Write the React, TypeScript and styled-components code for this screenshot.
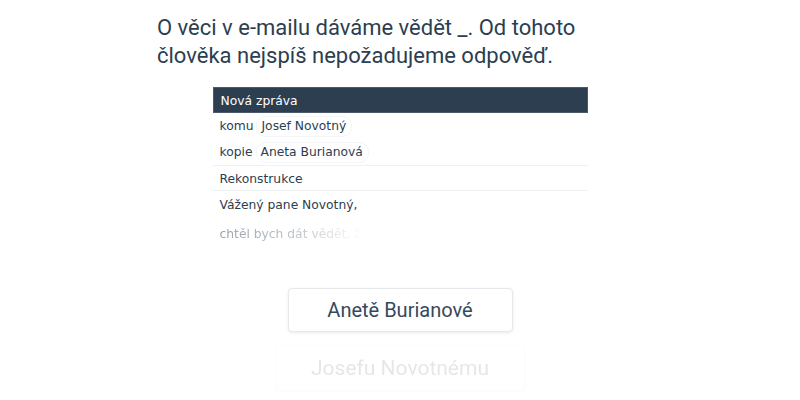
import React from 'react';
import styled, {createGlobalStyle} from "styled-components";

const GlobalStyle = createGlobalStyle`
  html, body {
    margin: 0;
    padding: 0;
    background: #ffffff;
  }
  body {
    font-family: Roboto, "Liberation Sans", sans-serif;
    color: #2c3e50;
  }
`

const colors = {
    dark: "#2c3e50",
    text: "#34495e",
    line: "#eff2f4",
}

type Recipient = { label: string, name: string }

const recipients: Recipient[] = [
    {label: "komu", name: "Josef Novotný"},
    {label: "kopie", name: "Aneta Burianová"},
]

export default function App() {
    return (
        <>
            <GlobalStyle/>
            <Page>
                <Question>
                    O věci v e-mailu dáváme vědět _. Od tohoto člověka nejspíš nepožadujeme odpověď.
                </Question>

                <Mail>
                    <MailTitle>Nová zpráva</MailTitle>
                    {recipients.map(r => (
                        <RecipientRow key={r.label}>
                            <Label>{r.label}</Label>
                            <Chip>{r.name}</Chip>
                        </RecipientRow>
                    ))}
                    <Subject>Rekonstrukce</Subject>
                    <Body>
                        <Line>Vážený pane Novotný,</Line>
                        <FadedLine>chtěl bych dát vědět, že</FadedLine>
                    </Body>
                </Mail>

                <Answers>
                    <Answer>Anetě Burianové</Answer>
                    <Answer $back>Josefu Novotnému</Answer>
                </Answers>
            </Page>
        </>
    );
}

const Page = styled.main`
  width: 800px;
  height: 400px;
  overflow: hidden;
  display: flex;
  flex-direction: column;
  align-items: center;
  padding-top: 14px;
  box-sizing: border-box;
`

const Question = styled.h1`
  width: 486px;
  margin: 0;
  font-family: Roboto, "Liberation Sans", sans-serif;
  font-weight: 400;
  font-size: 22px;
  line-height: 28px;
  color: ${colors.dark};
`

const Mail = styled.section`
  width: 375px;
  margin-top: 17px;
  font-family: "DejaVu Sans", Verdana, sans-serif;
  font-size: 12.3px;
  color: ${colors.dark};
`

const MailTitle = styled.div`
  height: 26px;
  line-height: 26px;
  padding: 0 7px;
  background: ${colors.dark};
  color: #ffffff;
  border: 1px solid #4a5a6a;
  box-sizing: border-box;
`

const RecipientRow = styled.div`
  height: 26px;
  display: flex;
  align-items: center;
  gap: 3px;
  padding: 0 7px;
`

const Label = styled.span`
  color: ${colors.dark};
`

const Chip = styled.span`
  padding: 2px 5px 2px 4px;
  border: 1px solid #f3f5f7;
  border-radius: 10px;
  line-height: 15px;
`

const Subject = styled.div`
  height: 26px;
  line-height: 26px;
  padding: 0 7px;
  border-top: 1px solid ${colors.line};
  border-bottom: 1px solid ${colors.line};
  box-sizing: border-box;
`

const Body = styled.div`
  padding: 5px 7px 0;
  height: 55px;
`

const Line = styled.div`
  height: 18px;
  line-height: 18px;
`

const FadedLine = styled(Line)`
  margin-top: 11px;
  color: #8e99a4;
  -webkit-mask-image: linear-gradient(to right, rgba(0, 0, 0, 0.9) 0%, rgba(0, 0, 0, 0.55) 22%, transparent 40%);
  mask-image: linear-gradient(to right, rgba(0, 0, 0, 0.9) 0%, rgba(0, 0, 0, 0.55) 22%, transparent 40%);
`

const Answers = styled.div`
  margin-top: 37px;
  display: flex;
  flex-direction: column;
  align-items: center;
  gap: 13px;
`

const Answer = styled.button<{ $back?: boolean }>`
  width: ${p => p.$back ? 249 : 225}px;
  height: ${p => p.$back ? 46 : 44}px;
  background: #ffffff;
  border: 1px solid #e6e9ec;
  border-radius: 4px;
  box-shadow: 0 1px 3px rgba(44, 62, 80, 0.1);
  font-family: Roboto, "Liberation Sans", sans-serif;
  font-size: ${p => p.$back ? 21 : 20}px;
  color: ${colors.text};
  opacity: ${p => p.$back ? 0.13 : 1};
  cursor: pointer;
`
